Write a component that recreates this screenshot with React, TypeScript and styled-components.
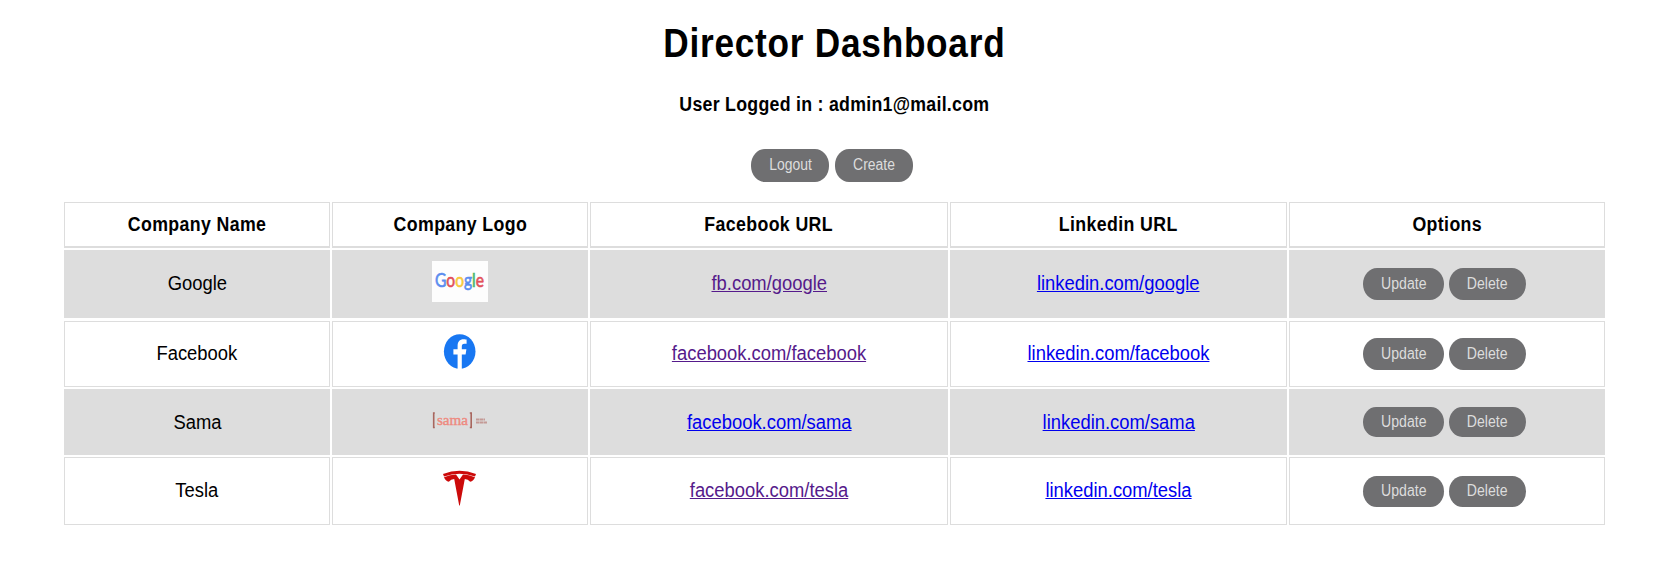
import React from "react";
import styled, { createGlobalStyle } from "styled-components";

const GlobalStyle = createGlobalStyle`
  body {
    margin: 0;
    background: #fff;
    color: #000;
    font-family: Arial, "Liberation Sans", sans-serif;
    font-size: 19.5px;
  }
`;

const Page = styled.main`
  box-sizing: border-box;
  width: 1666px;
  height: 570px;
  padding: 18px 61px 0 64px;
  display: flex;
  flex-direction: column;
`;

const Label = styled.span<{ $sx?: number; $ls?: number }>`
  display: inline-block;
  white-space: nowrap;
  letter-spacing: ${(p) => p.$ls ?? 0}px;
  transform: scaleX(${(p) => p.$sx ?? 0.943});
`;

const Title = styled.h1`
  margin: 0;
  text-align: center;
  font-size: 40px;
  line-height: 50px;
`;

const UserLine = styled.h4`
  margin: 24px 0 0;
  text-align: center;
  font-size: 19.5px;
  line-height: 24px;
`;

const Actions = styled.div<{ $top?: boolean }>`
  display: flex;
  justify-content: center;
  gap: ${(p) => (p.$top ? 6 : 5)}px;
  margin: ${(p) => (p.$top ? "33px 5px 20.5px 0" : "0 5px 0 0")};
`;

const Pill = styled.button<{ $w: number; $h: number }>`
  width: ${(p) => p.$w}px;
  height: ${(p) => p.$h}px;
  padding: 0 0 1px;
  border: 0;
  border-radius: 14px / 16px;
  background: #6f6f71;
  color: #ddd;
  font: 16px Arial, "Liberation Sans", sans-serif;
`;

const Table = styled.div`
  display: flex;
  flex-direction: column;
`;

const Cell = styled.div`
  display: flex;
  align-items: center;
  justify-content: center;
`;

const TextCell = styled(Cell)<{ $lift: number }>`
  padding-bottom: ${(p) => p.$lift}px;
`;

const Row = styled.div<{ $h: number; $gap: number; $shade?: boolean; $head?: boolean }>`
  display: grid;
  grid-template-columns: 266px 256px 358px 337px 316px;
  column-gap: 2px;
  height: ${(p) => p.$h}px;
  margin-bottom: ${(p) => p.$gap}px;
  font-weight: ${(p) => (p.$head ? 700 : 400)};

  > div {
    border: 1px solid #ddd;
    border-bottom-width: ${(p) => (p.$head ? 2 : 1)}px;
    background: ${(p) => (p.$shade ? "#ddd" : "#fff")};
  }
`;

const Link = styled.a<{ $visited?: boolean }>`
  display: inline-block;
  transform: scaleX(0.943);
  color: ${(p) => (p.$visited ? "#551a8b" : "#0000ee")};
  text-decoration: underline;
`;

const Logo = styled.svg`
  display: block;
  margin-bottom: 6px;
`;

const GoogleLogo = () => (
  <Logo width="56" height="41" viewBox="0 0 56 41">
    <rect width="56" height="41" fill="#fdfdfd" />
    <text
      x="3"
      y="26"
      fontFamily="Lato, sans-serif"
      fontSize="18.5"
      strokeWidth="0.6"
      textLength="49"
      lengthAdjust="spacingAndGlyphs"
    >
      <tspan fill="#5b8def" stroke="#5b8def">G</tspan>
      <tspan fill="#e2505a" stroke="#e2505a">o</tspan>
      <tspan fill="#f8c93c" stroke="#f8c93c">o</tspan>
      <tspan fill="#5b8def" stroke="#5b8def">g</tspan>
      <tspan fill="#4bb86a" stroke="#4bb86a">l</tspan>
      <tspan fill="#e2505a" stroke="#e2505a">e</tspan>
    </text>
  </Logo>
);

const FacebookLogo = () => (
  <Logo width="56" height="41" viewBox="0 0 56 41">
    <ellipse cx="27.7" cy="20.5" rx="15.8" ry="17.2" fill="#1877f2" />
    <path
      d="M25.6 38V23.4H21.4V18.3H25.6V15C25.6 10.5 27.7 8.2 31.6 8.2C33 8.2 34.6 8.5 34.6 8.5V12.8H32.4C30.4 12.8 29.8 14.1 29.8 15.4V18.3H34.4L33.6 23.4H29.8V38Z"
      fill="#fff"
    />
  </Logo>
);

const SamaLogo = () => (
  <Logo width="56" height="41" viewBox="0 0 56 41">
    <path
      d="M2.8 14H1.700V28.500H2.800M37.800 14H39.200V28.500H37.800"
      fill="none"
      stroke="#a8665e"
      strokeWidth="1.600"
    />
    <text
      x="5"
      y="25.5"
      fontFamily="Liberation Serif, serif"
      fontSize="15"
      fill="#ee8a80"
      stroke="#ee8a80"
      strokeWidth="0.4"
      textLength="31"
      lengthAdjust="spacingAndGlyphs"
    >
      sama
    </text>
    <path d="M44 20.500H53M44 23.500H55" stroke="#c49a96" strokeWidth="1.8" strokeDasharray="3.400 0.400" />
  </Logo>
);

const TeslaLogo = () => (
  <Logo width="56" height="41" viewBox="0 0 56 41">
    <g fill="#cc0a0a">
      <path d="M11 6Q27.500 -0.500 44 6L43 8.500Q27.500 3.100 12 8.500Z" />
      <path d="M12 9.300Q18 6.500 24 6.500L27.500 11.500L31 6.500Q37 6.500 43 9.300Q41.500 13 38.200 13.800Q36 11.300 32.800 11L27.800 37.500H27.200L22.200 11Q19 11.300 16.800 13.800Q13.500 13 12 9.300Z" />
    </g>
  </Logo>
);

const companies = [
  { name: "Google", logo: <GoogleLogo />, fb: "fb.com/google", visited: true, li: "linkedin.com/google", h: 68, gap: 3, bh: 32, lift: 2 },
  { name: "Facebook", logo: <FacebookLogo />, fb: "facebook.com/facebook", visited: true, li: "linkedin.com/facebook", h: 66, gap: 2, bh: 32, lift: 2 },
  { name: "Sama", logo: <SamaLogo />, fb: "facebook.com/sama", visited: false, li: "linkedin.com/sama", h: 66, gap: 2, bh: 30, lift: 0 },
  { name: "Tesla", logo: <TeslaLogo />, fb: "facebook.com/tesla", visited: true, li: "linkedin.com/tesla", h: 68, gap: 0, bh: 31, lift: 1 },
];

const headings = ["Company Name", "Company Logo", "Facebook URL", "Linkedin URL", "Options"];

export default function App() {
  return (
    <Page>
      <GlobalStyle />
      <Title><Label $sx={0.88} $ls={0.85}>Director Dashboard</Label></Title>
      <UserLine><Label $sx={0.91} $ls={0.3}>User Logged in : admin1@mail.com</Label></UserLine>
      <Actions $top>
        <Pill $w={78} $h={32.5}><Label $sx={0.87}>Logout</Label></Pill>
        <Pill $w={78} $h={32.5}><Label $sx={0.87}>Create</Label></Pill>
      </Actions>
      <Table>
        <Row $head $h={46} $gap={2}>
          {headings.map((h) => <Cell key={h}><Label $sx={0.91} $ls={0.4}>{h}</Label></Cell>)}
        </Row>
        {companies.map((c, i) => (
          <Row key={c.name} $h={c.h} $gap={c.gap} $shade={i % 2 === 0}>
            <TextCell $lift={c.lift}><Label>{c.name}</Label></TextCell>
            <Cell>{c.logo}</Cell>
            <TextCell $lift={c.lift}><Link href="#" $visited={c.visited}>{c.fb}</Link></TextCell>
            <TextCell $lift={c.lift}><Link href="#">{c.li}</Link></TextCell>
            <Cell>
              <Actions>
                <Pill $w={81} $h={c.bh}><Label $sx={0.88}>Update</Label></Pill>
                <Pill $w={77} $h={c.bh}><Label $sx={0.88}>Delete</Label></Pill>
              </Actions>
            </Cell>
          </Row>
        ))}
      </Table>
    </Page>
  );
}
